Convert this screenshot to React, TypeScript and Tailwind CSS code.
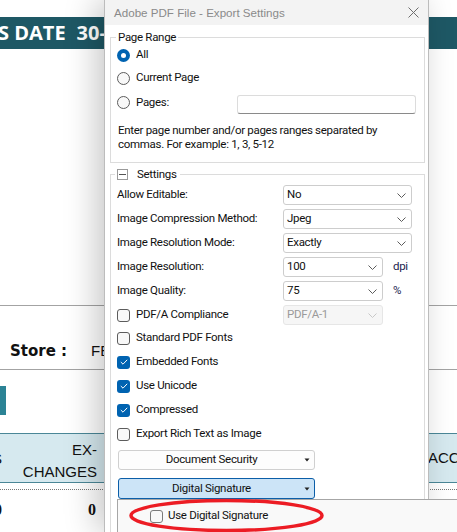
import React from "react";

const UI = "font-['Roboto',sans-serif] text-[11.5px] tracking-[-0.3px] text-[#111]";

function Chevron({ light }: { light?: boolean }) {
  return (
    <svg width="9" height="5" viewBox="0 0 9 5" className="shrink-0">
      <path d="M0.5 0.5 L4.5 4.5 L8.5 0.5" fill="none" stroke={light ? "#c8c8c8" : "#5c5c5c"} strokeWidth="1" />
    </svg>
  );
}

function Caret() {
  return (
    <svg width="6" height="4" viewBox="0 0 6 4" className="shrink-0">
      <path d="M0.5 0.5 L5.5 0.5 L3 3.5 Z" fill="#222" />
    </svg>
  );
}

function Combo({ value, wide, disabled }: { value: string; wide?: boolean; disabled?: boolean }) {
  return (
    <div
      className={
        (wide ? "w-[129px] " : "w-[100px] ") +
        (disabled
          ? "bg-[#f6f6f6] border-[#e6e6e6] text-[#9a9a9a] "
          : "bg-white border-[#cdcdcd] ") +
        "h-[20px] flex items-center justify-between pl-[3px] pr-[5px] rounded-[3px] border shrink-0"
      }
    >
      <span>{value}</span>
      <Chevron light={disabled} />
    </div>
  );
}

function Check({ checked }: { checked?: boolean }) {
  if (checked)
    return (
      <span className="w-[13px] h-[13px] rounded-[3px] bg-[#0063b1] flex items-center justify-center shrink-0">
        <svg width="8" height="6" viewBox="0 0 8 6">
          <path d="M0.8 3 L3 5.2 L7.2 0.8" fill="none" stroke="#fff" strokeWidth="1" />
        </svg>
      </span>
    );
  return <span className="w-[13px] h-[13px] rounded-[3px] border border-[#5c5c5c] bg-[#f8f8f8] shrink-0" />;
}

function Radio({ on }: { on?: boolean }) {
  if (on)
    return (
      <span className="w-[13px] h-[13px] rounded-full bg-[#0063b1] flex items-center justify-center shrink-0">
        <span className="w-[5px] h-[5px] rounded-full bg-white" />
      </span>
    );
  return <span className="w-[13px] h-[13px] rounded-full border border-[#5c5c5c] bg-[#f8f8f8] shrink-0" />;
}

function ComboRow({ label, value, wide, unit }: { label: string; value: string; wide?: boolean; unit?: string }) {
  return (
    <div className="h-[20px] flex items-center">
      <span className="w-[166px] shrink-0 whitespace-nowrap">{label}</span>
      <Combo value={value} wide={wide} />
      {unit && <span className="ml-[10px] text-[#1c1c50]">{unit}</span>}
    </div>
  );
}

function CheckRow({ label, checked }: { label: string; checked?: boolean }) {
  return (
    <div className="h-[24px] flex items-center gap-[6px]">
      <Check checked={checked} />
      <span className="whitespace-nowrap">{label}</span>
    </div>
  );
}

export default function App() {
  return (
    <div className="relative w-[457px] h-[532px] overflow-hidden bg-white">
      {/* page behind the dialog */}
      <div className="pt-[17px]">
        <div className="h-[32px] bg-[#1e5865] flex items-center overflow-hidden whitespace-nowrap text-white font-bold text-[20px] font-['Open_Sans',sans-serif]">
          <span className="ml-[-2px] shrink-0">S DATE</span>
          <span className="ml-[11px] shrink-0">30-06-2023</span>
        </div>
      </div>
      <div className="h-[256px]" />
      <div className="h-[65px] border-y border-[#a3a3a3] flex items-end pb-[9px] pl-[10px]">
        <span className="font-bold text-[15px] leading-[18px] font-['DejaVu_Sans',sans-serif] text-[#111]">Store :</span>
        <span className="ml-[24px] text-[15px] leading-[18px] font-['Liberation_Sans',sans-serif] text-[#111]">FEB</span>
      </div>
      <div className="mt-[16px] h-[29px] w-[6px] bg-[#2b8395]" />
      <div className="mt-[18px] h-[50px] border-y border-[#4a8797] bg-[#d6e9ef] flex font-['Liberation_Sans',sans-serif] text-[15px] text-[#111]">
        <div className="relative shrink-0 w-[104px] flex items-center justify-end pr-[7px] pt-[5px] leading-[22px] text-right">
          <span className="absolute left-[-8px] top-[14px]">S</span>
          <span>
            EX-
            <br />
            CHANGES
          </span>
        </div>
        <div className="shrink-0 w-[324px]" />
        <div className="shrink-0 flex items-center whitespace-nowrap">ACCOUNT</div>
      </div>
      <div className="mt-[6px] border-t border-dotted border-[#777]" />
      <div className="h-[40px] flex items-center font-['Liberation_Serif',serif] font-bold text-[16px] text-[#111]">
        <span className="ml-[-6px]">0</span>
        <span className="ml-[86px]">0</span>
      </div>

      {/* dialog */}
      <div className={"absolute left-[104px] top-0 w-[325px] h-[532px] overflow-hidden bg-white border-x border-[#bcbcbc] shadow-[-8px_0_30px_rgba(0,0,0,0.22)] " + UI}>
        <div className="h-[25px] bg-[#f3f3f3] flex items-center justify-between pl-[9px] pr-[9px]">
          <span className="font-['Liberation_Sans',sans-serif] tracking-normal text-[11.6px] text-[#8a8a8a]">Adobe PDF File - Export Settings</span>
          <svg width="11" height="11" viewBox="0 0 11 11">
            <path d="M0.5 0.5 L10.5 10.5 M10.5 0.5 L0.5 10.5" stroke="#6e6e6e" strokeWidth="1" />
          </svg>
        </div>

        <fieldset className="ml-[5px] mt-[5px] w-[315px] min-w-0 border border-[#dcdcdc] pl-[5px] pr-[8px] pb-[11px]">
          <legend className="px-[2px] leading-[14px]">Page Range</legend>
          <div className="h-[22px] flex items-center gap-[6px] ml-[1px]">
            <Radio on />
            <span>All</span>
          </div>
          <div className="h-[24px] flex items-center gap-[6px] ml-[1px]">
            <Radio />
            <span>Current Page</span>
          </div>
          <div className="h-[25px] flex items-center gap-[6px] ml-[1px]">
            <Radio />
            <span>Pages:</span>
            <div className="ml-auto mt-[3px] w-[179px] h-[19px] rounded-[3px] border border-[#dcdcdc] border-b-[#8a8a8a] bg-white" />
          </div>
          <p className="mt-[8px] ml-[2px] leading-[14px] whitespace-nowrap">
            Enter page number and/or pages ranges separated by
            <br />
            commas. For example: 1, 3, 5-12
          </p>
        </fieldset>

        <fieldset className="ml-[5px] mt-[4px] w-[315px] min-w-0 border border-[#dcdcdc] pl-[4px] pb-[40px]">
          <legend className="pl-[2px] pr-[3px] leading-[14px] flex items-center">
            <span className="w-[11px] h-[11px] border border-[#9a9a9a] flex items-center justify-center">
              <span className="w-[7px] h-px bg-[#555]" />
            </span>
            <span className="ml-[9px]">Settings</span>
          </legend>
          <div className="ml-[2px] mt-[4px] flex flex-col">
            <div className="flex flex-col gap-[4px]">
              <ComboRow label="Allow Editable:" value="No" wide />
              <ComboRow label="Image Compression Method:" value="Jpeg" wide />
              <ComboRow label="Image Resolution Mode:" value="Exactly" wide />
              <ComboRow label="Image Resolution:" value="100" unit="dpi" />
              <ComboRow label="Image Quality:" value="75" unit="%" />
              <div className="h-[20px] flex items-center">
                <div className="w-[166px] shrink-0 flex items-center gap-[6px]">
                  <Check />
                  <span>PDF/A Compliance</span>
                </div>
                <Combo value="PDF/A-1" disabled />
              </div>
            </div>
            <div className="mt-[1px]">
              <CheckRow label="Standard PDF Fonts" />
              <CheckRow label="Embedded Fonts" checked />
              <CheckRow label="Use Unicode" checked />
              <CheckRow label="Compressed" checked />
              <CheckRow label="Export Rich Text as Image" />
            </div>
            <div className="mt-[4px] ml-[1px] w-[197px] h-[20px] rounded-[3px] border border-[#d0d0d0] bg-[#fdfdfd] flex items-center pr-[4px]">
              <span className="flex-1 text-center">Document Security</span>
              <Caret />
            </div>
            <div className="mt-[8px] ml-[1px] w-[197px] h-[21px] rounded-[3px] border border-[#0b5ea8] bg-[#cce4f7] flex items-center pr-[4px]">
              <span className="flex-1 text-center">Digital Signature</span>
              <Caret />
            </div>
          </div>
        </fieldset>
      </div>

      {/* expanded Digital Signature panel */}
      <div className={"absolute left-[117px] top-[499px] w-[345px] h-[40px] border-t border-l border-[#a6a6a6] bg-[#f9f9f9] " + UI}>
        <div className="h-[32px] flex items-center gap-[5px] pl-[32px]">
          <span className="w-[13px] h-[13px] rounded-[3px] border border-[#7a7a7a] bg-[#f8f8f8]" />
          <span>Use Digital Signature</span>
        </div>
      </div>

      {/* red annotation ellipse */}
      <svg className="absolute left-[128px] top-[498px]" width="197" height="36" viewBox="0 0 197 36">
        <ellipse cx="98.5" cy="17.5" rx="95.5" ry="15" fill="none" stroke="#ec1c24" strokeWidth="3.5" />
      </svg>
    </div>
  );
}
